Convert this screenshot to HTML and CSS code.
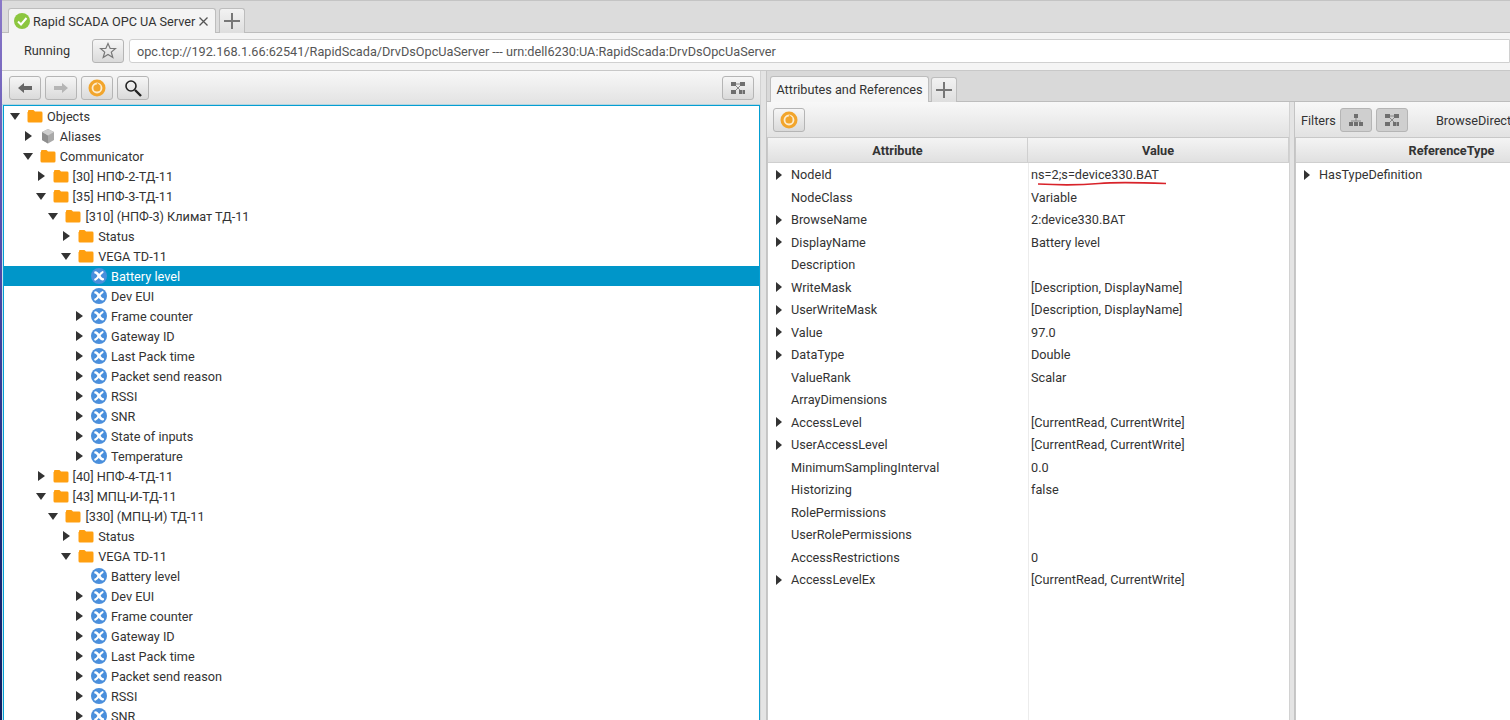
FILE: index.html
```html
<!DOCTYPE html>
<html lang="en">

<head>
    <meta charset="UTF-8">
    <meta name="viewport" content="width=device-width, initial-scale=1.0">
    <title>Rapid SCADA OPC UA Server</title>
    <link rel="stylesheet" href="styles.css">
</head>

<body>
    <svg class="defs" width="0" height="0">
        <symbol id="folder" viewBox="0 0 16 14">
            <path d="M1 3V2q0-1 1-1h4q1 0 1.500 1l.5.600h6q1.500 0 1.500 1.400v8q0 1.500-1.500 1.500H2q-1.500 0-1.500-1.500V3z" fill="#ff9f10"/>
        </symbol>
        <symbol id="variable" viewBox="0 0 16 16">
            <circle cx="8" cy="8" r="8" fill="#4a8fdc"/>
            <path d="M4.500 4.500C7.500 4.500 8.500 11.500 11.800 11.200" fill="none" stroke="#fff" stroke-width="2.600" stroke-linecap="round"/>
            <path d="M11.500 4.200C9 5 7 10.500 4.300 11.600" fill="none" stroke="#fff" stroke-width="2.200" stroke-linecap="round"/>
        </symbol>
        <symbol id="refresh" viewBox="0 0 18 18">
            <circle cx="9" cy="9" r="8.500" fill="#f2a52c"/>
            <circle cx="9" cy="9" r="4.500" fill="none" stroke="#fdeccd" stroke-width="1.800"/>
            <path d="M9 4.500l3 3" stroke="#f2a52c" stroke-width="1.600"/>
        </symbol>
        <symbol id="map" viewBox="0 0 16 14">
            <path d="M4 3h8M4 3l8 8M12 3l-8 8" stroke="#8a8a8a" stroke-width="1"/>
            <rect x="1" y="1" width="5" height="4" fill="#6f6f6f"/>
            <rect x="10" y="1" width="5" height="4" fill="#6f6f6f"/>
            <rect x="1" y="9" width="5" height="4" fill="#6f6f6f"/>
            <rect x="9" y="9" width="3" height="4" fill="#6f6f6f"/>
            <rect x="12.500" y="9" width="2.500" height="4" fill="#6f6f6f"/>
        </symbol>
    </svg>

    <div class="desktop-edge"></div>

    <div class="window">
        <div class="tabbar">
            <div class="tab server-tab">
                <svg class="ok-icon" viewBox="0 0 16 16">
                    <circle cx="8" cy="8" r="8" fill="#8cc63f"/>
                    <path d="M4 8.500l3 3 5.500-6.500" fill="none" stroke="#fff" stroke-width="2"/>
                </svg>
                <span>Rapid SCADA OPC UA Server</span>
                <svg class="close-icon" viewBox="0 0 9 9">
                    <path d="M.5.500l8 8M8.500.500l-8 8" stroke="#555" stroke-width="1.300"/>
                </svg>
            </div>
            <div class="tab add-tab"><span class="plus"></span></div>
        </div>

        <div class="addressbar">
            <span class="status">Running</span>
            <div class="btn">
                <svg class="star" viewBox="0 0 18 18">
                    <path d="M9 1.500l2.200 5h5.300l-4.200 3.600 1.500 5.400L9 12.500l-4.800 3 1.500-5.400L1.500 6.500h5.300z" fill="none" stroke="#777" stroke-width="1.200"/>
                </svg>
            </div>
            <div class="address">opc.tcp://192.168.1.66:62541/RapidScada/DrvDsOpcUaServer --- urn:dell6230:UA:RapidScada:DrvDsOpcUaServer</div>
        </div>

        <div class="main">
            <div class="left-pane">
                <div class="toolbar">
                    <div class="btn">
                        <svg class="nav-icon" viewBox="0 0 14 10"><path d="M0 5l6-5v3h8v4H6v3z" fill="#666"/></svg>
                    </div>
                    <div class="btn">
                        <svg class="nav-icon" viewBox="0 0 14 10"><path d="M14 5L8 0v3H0v4h8v3z" fill="#b5b5b5"/></svg>
                    </div>
                    <div class="btn"><svg class="refresh-icon"><use href="#refresh"/></svg></div>
                    <div class="btn">
                        <svg class="search-icon" viewBox="0 0 18 18">
                            <circle cx="7" cy="7" r="5" fill="none" stroke="#222" stroke-width="1.600"/>
                            <path d="M11 11l6 6" stroke="#222" stroke-width="2.400"/>
                        </svg>
                    </div>
                    <div class="btn push-right"><svg class="map-icon"><use href="#map"/></svg></div>
                </div>

                <div class="tree">
                    <div class="node d0"><i class="arrow down"></i><svg class="icon"><use href="#folder"/></svg>Objects</div>
                    <div class="node d1"><i class="arrow right"></i>
                        <svg class="icon" viewBox="0 0 16 16">
                            <path d="M8 1l6 3v8l-6 3.500L2 12V4z" fill="#a9a9a9"/>
                            <path d="M8 7.500v8L2 12V4z" fill="#8e8e8e"/>
                            <path d="M8 1l6 3-6 3.500L2 4z" fill="#cfcfcf"/>
                        </svg>Aliases</div>
                    <div class="node d1"><i class="arrow down"></i><svg class="icon"><use href="#folder"/></svg>Communicator</div>
                    <div class="node d2"><i class="arrow right"></i><svg class="icon"><use href="#folder"/></svg>[30] НПФ-2-ТД-11</div>
                    <div class="node d2"><i class="arrow down"></i><svg class="icon"><use href="#folder"/></svg>[35] НПФ-3-ТД-11</div>
                    <div class="node d3"><i class="arrow down"></i><svg class="icon"><use href="#folder"/></svg>[310] (НПФ-3) Климат ТД-11</div>
                    <div class="node d4"><i class="arrow right"></i><svg class="icon"><use href="#folder"/></svg>Status</div>
                    <div class="node d4"><i class="arrow down"></i><svg class="icon"><use href="#folder"/></svg>VEGA TD-11</div>
                    <div class="node d5 selected"><i class="arrow"></i><svg class="icon"><use href="#variable"/></svg>Battery level</div>
                    <div class="node d5"><i class="arrow"></i><svg class="icon"><use href="#variable"/></svg>Dev EUI</div>
                    <div class="node d5"><i class="arrow right"></i><svg class="icon"><use href="#variable"/></svg>Frame counter</div>
                    <div class="node d5"><i class="arrow right"></i><svg class="icon"><use href="#variable"/></svg>Gateway ID</div>
                    <div class="node d5"><i class="arrow right"></i><svg class="icon"><use href="#variable"/></svg>Last Pack time</div>
                    <div class="node d5"><i class="arrow right"></i><svg class="icon"><use href="#variable"/></svg>Packet send reason</div>
                    <div class="node d5"><i class="arrow right"></i><svg class="icon"><use href="#variable"/></svg>RSSI</div>
                    <div class="node d5"><i class="arrow right"></i><svg class="icon"><use href="#variable"/></svg>SNR</div>
                    <div class="node d5"><i class="arrow right"></i><svg class="icon"><use href="#variable"/></svg>State of inputs</div>
                    <div class="node d5"><i class="arrow right"></i><svg class="icon"><use href="#variable"/></svg>Temperature</div>
                    <div class="node d2"><i class="arrow right"></i><svg class="icon"><use href="#folder"/></svg>[40] НПФ-4-ТД-11</div>
                    <div class="node d2"><i class="arrow down"></i><svg class="icon"><use href="#folder"/></svg>[43] МПЦ-И-ТД-11</div>
                    <div class="node d3"><i class="arrow down"></i><svg class="icon"><use href="#folder"/></svg>[330] (МПЦ-И) ТД-11</div>
                    <div class="node d4"><i class="arrow right"></i><svg class="icon"><use href="#folder"/></svg>Status</div>
                    <div class="node d4"><i class="arrow down"></i><svg class="icon"><use href="#folder"/></svg>VEGA TD-11</div>
                    <div class="node d5"><i class="arrow"></i><svg class="icon"><use href="#variable"/></svg>Battery level</div>
                    <div class="node d5"><i class="arrow right"></i><svg class="icon"><use href="#variable"/></svg>Dev EUI</div>
                    <div class="node d5"><i class="arrow right"></i><svg class="icon"><use href="#variable"/></svg>Frame counter</div>
                    <div class="node d5"><i class="arrow right"></i><svg class="icon"><use href="#variable"/></svg>Gateway ID</div>
                    <div class="node d5"><i class="arrow right"></i><svg class="icon"><use href="#variable"/></svg>Last Pack time</div>
                    <div class="node d5"><i class="arrow right"></i><svg class="icon"><use href="#variable"/></svg>Packet send reason</div>
                    <div class="node d5"><i class="arrow right"></i><svg class="icon"><use href="#variable"/></svg>RSSI</div>
                    <div class="node d5"><i class="arrow right"></i><svg class="icon"><use href="#variable"/></svg>SNR</div>
                </div>
            </div>

            <div class="splitter"></div>

            <div class="right-pane">
                <div class="tabstrip">
                    <div class="tab attr-tab">Attributes and References</div>
                    <div class="tab add-tab"><span class="plus"></span></div>
                </div>

                <div class="panes">
                    <div class="attr-pane">
                        <div class="toolbar small">
                            <div class="btn"><svg class="refresh-icon"><use href="#refresh"/></svg></div>
                        </div>
                        <div class="grid attr-grid">
                            <div class="head">Attribute</div>
                            <div class="head">Value</div>

                            <div class="name"><i class="arrow right"></i>NodeId</div><div class="value">ns=2;s=device330.BAT</div>
                            <div class="name"><i class="arrow"></i>NodeClass</div><div class="value">Variable</div>
                            <div class="name"><i class="arrow right"></i>BrowseName</div><div class="value">2:device330.BAT</div>
                            <div class="name"><i class="arrow right"></i>DisplayName</div><div class="value">Battery level</div>
                            <div class="name"><i class="arrow"></i>Description</div><div class="value"></div>
                            <div class="name"><i class="arrow right"></i>WriteMask</div><div class="value">[Description, DisplayName]</div>
                            <div class="name"><i class="arrow right"></i>UserWriteMask</div><div class="value">[Description, DisplayName]</div>
                            <div class="name"><i class="arrow right"></i>Value</div><div class="value">97.0</div>
                            <div class="name"><i class="arrow right"></i>DataType</div><div class="value">Double</div>
                            <div class="name"><i class="arrow"></i>ValueRank</div><div class="value">Scalar</div>
                            <div class="name"><i class="arrow"></i>ArrayDimensions</div><div class="value"></div>
                            <div class="name"><i class="arrow right"></i>AccessLevel</div><div class="value">[CurrentRead, CurrentWrite]</div>
                            <div class="name"><i class="arrow right"></i>UserAccessLevel</div><div class="value">[CurrentRead, CurrentWrite]</div>
                            <div class="name"><i class="arrow"></i>MinimumSamplingInterval</div><div class="value">0.0</div>
                            <div class="name"><i class="arrow"></i>Historizing</div><div class="value">false</div>
                            <div class="name"><i class="arrow"></i>RolePermissions</div><div class="value"></div>
                            <div class="name"><i class="arrow"></i>UserRolePermissions</div><div class="value"></div>
                            <div class="name"><i class="arrow"></i>AccessRestrictions</div><div class="value">0</div>
                            <div class="name"><i class="arrow right"></i>AccessLevelEx</div><div class="value">[CurrentRead, CurrentWrite]</div>
                        </div>
                        <svg class="scribble" viewBox="0 0 130 6">
                            <path d="M1 4C30 5.500 45 5 62 3.500S100 2.500 129 3.500" fill="none" stroke="#d8232a" stroke-width="1.700"/>
                        </svg>
                    </div>

                    <div class="splitter thin"></div>

                    <div class="ref-pane">
                        <div class="toolbar small filters">
                            <span class="filter-label">Filters</span>
                            <div class="btn pressed">
                                <svg class="map-icon" viewBox="0 0 16 14">
                                    <rect x="6" y="1" width="4" height="4" fill="#6f6f6f"/>
                                    <path d="M8 5v3M3 8h10" stroke="#8a8a8a" stroke-width="1"/>
                                    <rect x="1" y="9" width="4" height="4" fill="#6f6f6f"/>
                                    <rect x="6" y="9" width="4" height="4" fill="#6f6f6f"/>
                                    <rect x="11" y="9" width="4" height="4" fill="#6f6f6f"/>
                                </svg>
                            </div>
                            <div class="btn pressed"><svg class="map-icon"><use href="#map"/></svg></div>
                            <span class="direction-label">BrowseDirection</span>
                        </div>
                        <div class="grid ref-grid">
                            <div class="head">ReferenceType</div>
                            <div class="name"><i class="arrow right"></i>HasTypeDefinition</div>
                        </div>
                    </div>
                </div>
            </div>
        </div>
    </div>
</body>
</html>
```

FILE: styles.css
```css
* {
    box-sizing: border-box;
}

body, html {
    margin: 0;
    padding: 0;
    width: 100%;
    height: 100%;
    overflow: hidden;
}

body {
    display: flex;
    font-family: Roboto, "Liberation Sans", sans-serif;
    font-size: 12.7px;
    color: #333;
    background: #f4f4f4;
}

.defs {
    position: absolute;
}

.desktop-edge {
    width: 2px;
    flex: none;
    background: linear-gradient(#8a78c8, #5a4fb0 30%, #1c2a80 70%, #101a5c);
}

.window {
    flex: 1;
    min-width: 0;
    display: flex;
    flex-direction: column;
    background: #f4f4f4;
}

/* top tabs */
.tabbar {
    height: 33px;
    flex: none;
    display: flex;
    align-items: flex-end;
    gap: 3px;
    padding-left: 6px;
    background: #dcdcdc;
    border-top: 1px solid #c4c4c4;
    border-bottom: 1px solid #bdbdbd;
}

.tab {
    display: flex;
    align-items: center;
    height: 25px;
    margin-bottom: -1px;
    border: 1px solid #bdbdbd;
    border-bottom: none;
    border-radius: 3px 3px 0 0;
    background: linear-gradient(#ffffff, #f1f1f1);
}

.server-tab {
    width: 208px;
    padding-left: 5px;
    background: #f4f4f4;
}

.server-tab span {
    margin-left: 3px;
}

.ok-icon {
    width: 16px;
    height: 16px;
}

.close-icon {
    width: 9px;
    height: 9px;
    margin-left: 4px;
}

.add-tab {
    width: 26px;
    justify-content: center;
    background: linear-gradient(#f2f2f2, #dedede);
}

.plus {
    width: 16px;
    height: 16px;
    background: linear-gradient(#777, #777) center / 16px 2px no-repeat,
                linear-gradient(#777, #777) center / 2px 16px no-repeat;
}

/* address row */
.addressbar {
    height: 38px;
    flex: none;
    display: flex;
    align-items: center;
    border-bottom: 1px solid #c8c8c8;
    padding-bottom: 2px;
}

.status {
    width: 90px;
    padding-left: 22px;
}

.address {
    flex: 1;
    height: 24px;
    margin-left: 5px;
    padding: 4px 7px;
    background: #fff;
    border: 1px solid #d0d0d0;
    border-radius: 3px 0 0 3px;
    color: #555;
    white-space: nowrap;
}

.btn {
    flex: none;
    display: flex;
    align-items: center;
    justify-content: center;
    width: 32px;
    height: 24px;
    background: linear-gradient(#f6f6f6, #dadada);
    border: 1px solid #b5b5b5;
    border-radius: 3px;
}

.btn.pressed {
    background: #cfcfcf;
}

.star {
    width: 18px;
    height: 18px;
}

.main {
    flex: 1;
    min-height: 0;
    display: flex;
}

/* left side */
.left-pane {
    width: 758px;
    flex: none;
    display: flex;
    flex-direction: column;
    min-height: 0;
}

.toolbar {
    height: 34px;
    flex: none;
    display: flex;
    align-items: center;
    gap: 4px;
    padding: 0 6px 0 7px;
    background: linear-gradient(#f8f8f8, #e2e2e2);
}

.toolbar.small {
    height: 35px;
    padding-left: 6px;
    padding-top: 1px;
}

.push-right {
    margin-left: auto;
}

.nav-icon {
    width: 14px;
    height: 10px;
}

.refresh-icon {
    width: 18px;
    height: 18px;
}

.search-icon {
    width: 18px;
    height: 18px;
}

.map-icon {
    width: 16px;
    height: 14px;
}

.tree {
    flex: 1;
    min-height: 0;
    overflow: hidden;
    margin-left: 1px;
    background: #fff;
    border: 1px solid #039ed3;
    border-bottom: none;
    box-shadow: 0 0 0 1px rgba(3, 158, 211, 0.2);
}

.node {
    display: flex;
    align-items: center;
    height: 20px;
    white-space: nowrap;
}

.node.selected {
    background: #0096c9;
    color: #fff;
}

.d0 { padding-left: 1px; }
.d1 { padding-left: 13.8px; }
.d2 { padding-left: 26.6px; }
.d3 { padding-left: 39.4px; }
.d4 { padding-left: 52.2px; }
.d5 { padding-left: 65px; }

.arrow {
    flex: none;
    position: relative;
    width: 20px;
    height: 10px;
}

.arrow.right::before {
    content: '';
    position: absolute;
    left: 7px;
    top: 0;
    border-left: 7px solid #333;
    border-top: 5px solid transparent;
    border-bottom: 5px solid transparent;
}

.arrow.down::before {
    content: '';
    position: absolute;
    left: 5px;
    top: 2px;
    border-top: 7px solid #333;
    border-left: 5px solid transparent;
    border-right: 5px solid transparent;
}

.icon {
    flex: none;
    width: 16px;
    height: 16px;
    margin: 0 4px 0 2px;
}

.splitter {
    width: 7px;
    flex: none;
    background: #e4e4e4;
    border-left: 1px solid #d2d2d2;
    border-right: 1px solid #c4c4c4;
}

.splitter.thin {
    width: 6px;
}

/* right side */
.right-pane {
    flex: 1;
    min-width: 0;
    display: flex;
    flex-direction: column;
}

.tabstrip {
    height: 31px;
    flex: none;
    display: flex;
    align-items: flex-end;
    gap: 2px;
    padding-left: 3px;
    background: #d9d9d9;
    border-bottom: 1px solid #bdbdbd;
}

.attr-tab {
    width: 159px;
    height: 26px;
    justify-content: center;
    background: #f6f6f6;
}

.panes {
    flex: 1;
    min-height: 0;
    display: flex;
}

.attr-pane {
    position: relative;
    width: 522px;
    flex: none;
    display: flex;
    flex-direction: column;
}

.ref-pane {
    flex: 1;
    min-width: 0;
    overflow: hidden;
    display: flex;
    flex-direction: column;
}

.direction-label {
    flex: none;
    margin-left: 24px;
}

.filters {
    overflow: hidden;
}

.grid {
    flex: 1;
    display: grid;
    grid-auto-rows: 22.5px;
    grid-template-rows: 25.3px;
    align-content: start;
    background: #fff;
    border-top: 1px solid #c8c8c8;
    border-left: 1px solid #c8c8c8;
}

.attr-grid {
    grid-template-columns: 260px 261px;
    /* column line runs the full height, also under the empty rows */
    background: linear-gradient(#ececec, #ececec) 260px 0 / 1px 100% no-repeat, #fff;
}

.ref-grid {
    width: 313px;
    flex: 1 0 auto;
    grid-template-columns: 1fr;
}

.head {
    display: flex;
    align-items: center;
    justify-content: center;
    font-weight: bold;
    background: linear-gradient(#f4f4f4, #e0e0e0);
    border-right: 1px solid #cfcfcf;
    border-bottom: 1px solid #cfcfcf;
}

.name, .value {
    display: flex;
    align-items: center;
    white-space: nowrap;
}

.name .arrow {
    width: 23px;
    height: 10px;
}

.name .arrow.right::before {
    left: 8px;
    border-left-width: 6px;
}

.value {
    padding-left: 3px;
}

.scribble {
    position: absolute;
    left: 270px;
    top: 78px;
    width: 130px;
    height: 6px;
}
```
